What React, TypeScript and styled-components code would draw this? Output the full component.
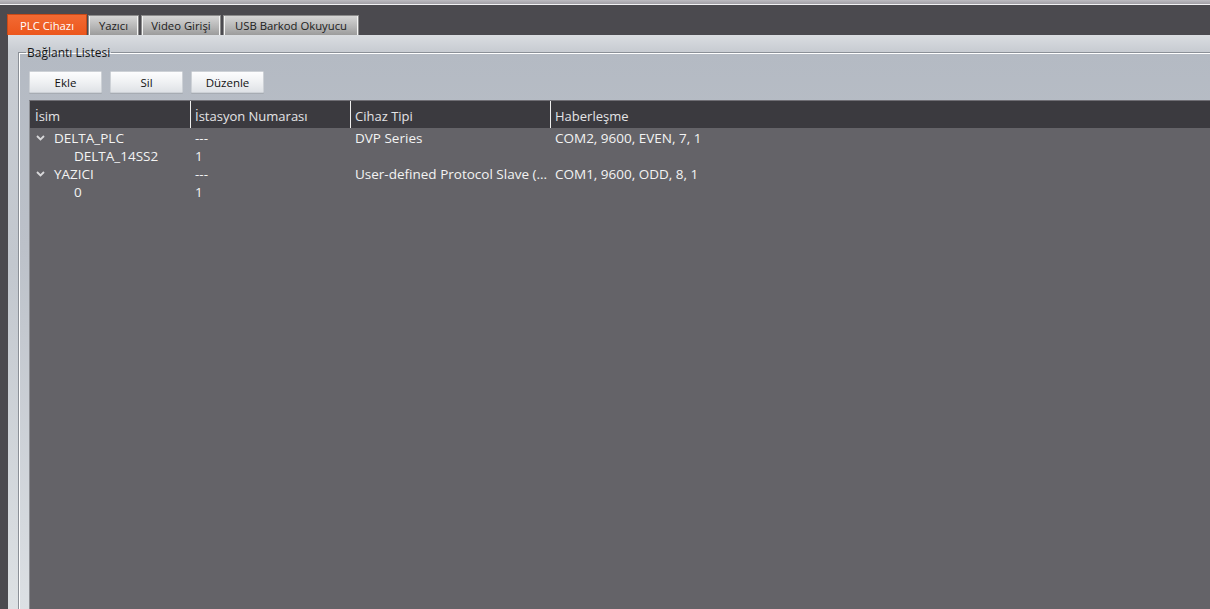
import React from "react";
import styled, { createGlobalStyle } from "styled-components";

const Global = createGlobalStyle`
  html, body { margin: 0; padding: 0; background: #4b4a4f; overflow: hidden; }
  #root { height: 609px; }
`;

const Screen = styled.div`
  width: 1240px;
  height: 609px;
  display: flex;
  flex-direction: column;
  background: #4b4a4f;
  font-family: "Segoe UI", "Open Sans", "Noto Sans", sans-serif;
`;

const TopStrip = styled.div`
  flex: none;
  height: 4px;
  background: linear-gradient(#bdbcc1, #a19fa5);
  border-bottom: 1px solid #f2f2f4;
`;

const TabBar = styled.div`
  flex: none;
  height: 30px;
  display: flex;
  align-items: flex-end;
  padding-left: 7px;
`;

const Tab = styled.div<{ $active?: boolean; $w: number }>`
  box-sizing: border-box;
  width: ${(p) => p.$w}px;
  height: ${(p) => (p.$active ? "21px" : "20px")};
  margin-right: ${(p) => (p.$active ? "1px" : "2px")};
  display: flex;
  align-items: center;
  justify-content: center;
  font-size: 11.3px;
  color: ${(p) => (p.$active ? "#ffffff" : "#1c1c1c")};
  background: ${(p) =>
    p.$active
      ? "linear-gradient(#f26a33, #ec561c)"
      : "linear-gradient(#d6d6d6, #b4b4b4 60%, #9c9c9c)"};
  border: 1px solid ${(p) => (p.$active ? "#c94a18" : "#8c8c8c")};
  border-bottom: none;
  box-shadow: ${(p) =>
    p.$active ? "none" : "inset 1px 0 0 #f4f4f4, inset -1px 0 0 #f4f4f4"};
  white-space: nowrap;
`;

const Panel = styled.div`
  flex: 1;
  min-height: 0;
  margin-left: 8px;
  padding: 10px 0 0 10px;
  display: flex;
  flex-direction: column;
  background: linear-gradient(#dadde1 0px, #c8ccd2 16px, #c2c7ce 40%, #dde1e4 100%);
`;

const GroupBox = styled.fieldset`
  flex: 1;
  min-height: 0;
  margin: 0;
  padding: 11px 0 0 10px;
  display: flex;
  flex-direction: column;
  border: none;
  border-top: 1px solid #8b9097;
  border-left: 1px solid #8b9097;
  box-shadow: inset 1px 1px 0 #ffffff;
  background: linear-gradient(#b4bac3, #bcc1c9 35%, #dce0e4 100%);
`;

const Legend = styled.legend`
  margin-left: -3px;
  padding: 0 1px;
  font-size: 12px;
  line-height: 15px;
  color: #151515;
`;

const ButtonRow = styled.div`
  display: flex;
  gap: 8px;
`;

const ToolButton = styled.button`
  box-sizing: border-box;
  width: 73px;
  height: 22px;
  padding: 0;
  font-family: inherit;
  font-size: 11.5px;
  color: #111;
  background: linear-gradient(#fdfdfe, #eef0f2 55%, #dfe2e6);
  border: 1px solid #cdd1d6;
  border-radius: 1px;
  box-shadow: 0 1px 0 #a7acb3;
`;

const List = styled.div`
  flex: 1;
  min-height: 0;
  margin-top: 7px;
  background: #646368;
  border-top: 1px solid #6f6e74;
  border-left: 1px solid #8c8e93;
`;

const Columns = "160px 160px 200px 1fr";

const HeaderRow = styled.div`
  display: grid;
  grid-template-columns: ${Columns};
  height: 27px;
  background: #3b3a3f;
`;

const HeaderCell = styled.div<{ $first?: boolean }>`
  box-sizing: border-box;
  display: flex;
  align-items: center;
  padding: 2px 0 0 ${(p) => (p.$first ? "5px" : "4px")};
  border-left: ${(p) => (p.$first ? "none" : "1px solid #eeeeee")};
  font-size: 13px;
  color: #e4e4e6;
  white-space: nowrap;
`;

const Body = styled.div`
  padding-top: 1px;
`;

const Row = styled.div`
  display: grid;
  grid-template-columns: ${Columns};
  height: 18px;
  font-size: 13.5px;
  line-height: 18px;
  color: #f3f3f3;
`;

const Cell = styled.div`
  display: flex;
  align-items: center;
  padding-left: 5px;
  white-space: nowrap;
  overflow: hidden;
`;

const NameCell = styled.div<{ $level: number }>`
  display: flex;
  align-items: center;
  padding-left: ${(p) => (p.$level === 0 ? "6px" : "44px")};
  white-space: nowrap;
`;

const Chevron = styled.svg`
  width: 9px;
  height: 6px;
  margin-right: 9px;
  margin-top: 0px;
  flex: none;
`;

type Item = { name: string; level: number; station: string; type: string; comm: string };

const items: Item[] = [
  { name: "DELTA_PLC", level: 0, station: "---", type: "DVP Series", comm: "COM2, 9600, EVEN, 7, 1" },
  { name: "DELTA_14SS2", level: 1, station: "1", type: "", comm: "" },
  { name: "YAZICI", level: 0, station: "---", type: "User-defined Protocol Slave (...", comm: "COM1, 9600, ODD, 8, 1" },
  { name: "0", level: 1, station: "1", type: "", comm: "" },
];

const tabs = [
  { label: "PLC Cihazı", w: 80, active: true },
  { label: "Yazıcı", w: 51, active: false },
  { label: "Video Girişi", w: 80, active: false },
  { label: "USB Barkod Okuyucu", w: 136, active: false },
];

export default function App() {
  return (
    <Screen>
      <Global />
      <TopStrip />
      <TabBar>
        {tabs.map((t) => (
          <Tab key={t.label} $active={t.active} $w={t.w}>
            {t.label}
          </Tab>
        ))}
      </TabBar>
      <Panel>
        <GroupBox>
          <Legend>Bağlantı Listesi</Legend>
          <ButtonRow>
            <ToolButton>Ekle</ToolButton>
            <ToolButton>Sil</ToolButton>
            <ToolButton>Düzenle</ToolButton>
          </ButtonRow>
          <List>
            <HeaderRow>
              <HeaderCell $first>İsim</HeaderCell>
              <HeaderCell>İstasyon Numarası</HeaderCell>
              <HeaderCell>Cihaz Tipi</HeaderCell>
              <HeaderCell>Haberleşme</HeaderCell>
            </HeaderRow>
            <Body>
              {items.map((it, i) => (
                <Row key={i}>
                  <NameCell $level={it.level}>
                    {it.level === 0 && (
                      <Chevron viewBox="0 0 9 6">
                        <path d="M1 1 L4.5 4.5 L8 1" fill="none" stroke="#d8d8da" strokeWidth="1.8" />
                      </Chevron>
                    )}
                    {it.name}
                  </NameCell>
                  <Cell>{it.station}</Cell>
                  <Cell>{it.type}</Cell>
                  <Cell>{it.comm}</Cell>
                </Row>
              ))}
            </Body>
          </List>
        </GroupBox>
      </Panel>
    </Screen>
  );
}
